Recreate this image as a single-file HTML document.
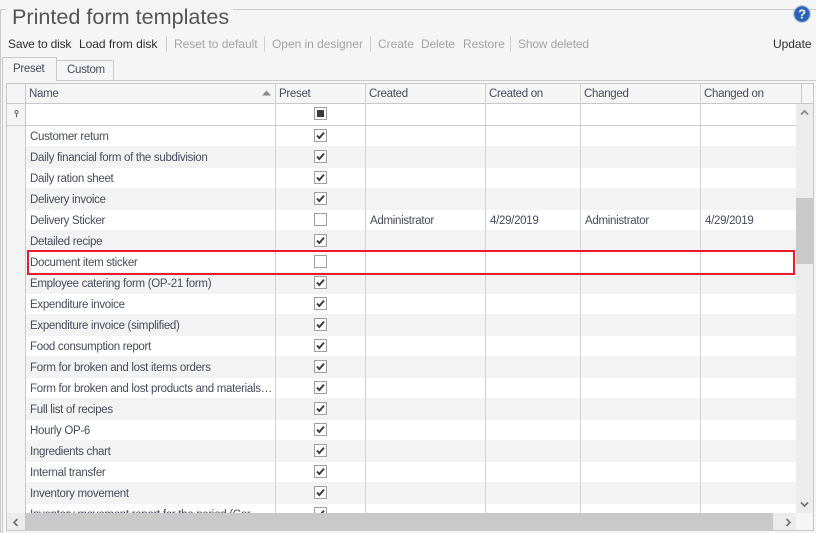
<!DOCTYPE html>
<html><head><meta charset="utf-8">
<style>
*{box-sizing:border-box}
html,body{margin:0;padding:0}
body{width:816px;height:533px;background:#f5f5f5;position:relative;overflow:hidden;font-family:"Liberation Sans",sans-serif;font-size:11.5px;letter-spacing:-.3px;color:#474b5c}
.a{position:absolute}
.t{position:absolute;white-space:nowrap;line-height:14px}
.tb{top:37px;color:#2f2f2f;font-size:12px;letter-spacing:-.03px}
.d{color:#a3a3a3}
.s{position:absolute;top:36px;width:1px;height:16px;background:#cfcfcf}
.h{position:absolute;top:84px;height:19px;border-right:1px solid #c9c9c9}
.h span{position:absolute;left:3px;top:3px;white-space:nowrap;line-height:14px}
.r{position:absolute;left:26px;width:770px;height:21px;background:#fff;overflow:hidden}
.r.g{background:#f3f3f3;margin-top:-1px;height:22px}
.r span{position:absolute;top:4px;line-height:14px;white-space:nowrap}
.r.g span{top:5px}
.r span.n{left:4px}
.r span.c{left:344px}.r span.o{left:464px}.r span.m{left:559px}.r span.p{left:679px}
.r svg{position:absolute;left:288px;top:3px}
.r.g svg{top:4px}
.v{position:absolute;top:84px;width:1px;height:429px;background:#d2d2d2}
</style></head><body>
<svg width="0" height="0" style="position:absolute"><defs>
<symbol id="u" viewBox="0 0 13 13"><rect x=".5" y=".5" width="12" height="12" fill="#fff" stroke="#a0a0a0"/></symbol>
<symbol id="k" viewBox="0 0 13 13"><rect x=".5" y=".5" width="12" height="12" fill="#fff" stroke="#a0a0a0"/><path d="M3 6.5 5.3 9 10 3.6" fill="none" stroke="#3c3c3c" stroke-width="2"/></symbol>
</defs></svg>

<div class="a" style="left:0;top:9px;width:6px;height:1px;background:#c9c9c9"></div>
<div class="a" style="left:233px;top:9px;width:583px;height:1px;background:#c9c9c9"></div>
<div class="a" style="left:0;top:9px;width:1px;height:524px;background:#c9c9c9"></div>
<div class="t" style="left:12px;top:5px;font-size:21.6px;letter-spacing:0;line-height:24px;color:#555">Printed form templates</div>
<svg class="a" style="left:793px;top:5px" width="18" height="18" viewBox="0 0 18 18"><circle cx="9" cy="9" r="8.3" fill="#2a62b8" stroke="#b8c4d8" stroke-width="1.2"/><text x="9" y="13.5" font-family="Liberation Sans" font-weight="700" font-size="13" fill="#fff" text-anchor="middle">?</text></svg>

<div class="t tb" style="left:8px;letter-spacing:-.18px">Save to disk</div>
<div class="t tb" style="left:79px">Load from disk</div>
<div class="s" style="left:166px"></div>
<div class="t tb d" style="left:174px">Reset to default</div>
<div class="s" style="left:264px"></div>
<div class="t tb d" style="left:272px">Open in designer</div>
<div class="s" style="left:370px"></div>
<div class="t tb d" style="left:378px">Create</div>
<div class="t tb d" style="left:421px;letter-spacing:-.15px">Delete</div>
<div class="t tb d" style="left:463px">Restore</div>
<div class="s" style="left:510px"></div>
<div class="t tb d" style="left:518px;letter-spacing:-.15px">Show deleted</div>
<div class="t tb" style="left:773px">Update</div>

<div class="a" style="left:2px;top:80px;width:814px;height:1px;background:#c9c9c9"></div>
<div class="a" style="left:2px;top:80px;width:1px;height:453px;background:#c9c9c9"></div>
<div class="a" style="left:56px;top:60px;width:58px;height:21px;border:1px solid #c9c9c9;background:#f5f5f5"></div>
<div class="a" style="left:2px;top:57px;width:55px;height:24px;border:1px solid #c9c9c9;border-bottom:0;background:#f5f5f5"></div>
<div class="t" style="left:13px;top:62px">Preset</div>
<div class="t" style="left:67px;top:63px">Custom</div>

<div class="a" style="left:6px;top:83px;width:808px;height:448px;border:1px solid #c9c9c9;background:#f5f5f5"></div>
<div class="a" style="left:7px;top:84px;width:806px;height:446px;background:#f5f5f5"></div>
<div class="a" style="left:26px;top:104px;width:770px;height:409px;background:#fff"></div>
<div class="h" style="left:7px;width:19px"></div>
<div class="h" style="left:26px;width:250px"><span>Name</span></div>
<svg class="a" style="left:262px;top:90px" width="9" height="6"><path d="M0 5.5 4.5 .5 9 5.5Z" fill="#8a8a8a"/></svg>
<div class="h" style="left:276px;width:90px"><span>Preset</span></div>
<div class="h" style="left:366px;width:120px"><span>Created</span></div>
<div class="h" style="left:486px;width:95px"><span>Created on</span></div>
<div class="h" style="left:581px;width:120px"><span>Changed</span></div>
<div class="h" style="left:701px;width:101px"><span>Changed on</span></div>
<div class="a" style="left:7px;top:103px;width:806px;height:1px;background:#c9c9c9"></div>
<div class="a" style="left:7px;top:125px;width:789px;height:1px;background:#cfcfcf"></div>
<svg class="a" style="left:14px;top:110px" width="5" height="8"><circle cx="2.5" cy="2" r="1.6" fill="none" stroke="#666"/><path d="M2.5 3.5V7.5" stroke="#666"/></svg>
<svg class="a" style="left:314px;top:107px" width="13" height="13"><rect x=".5" y=".5" width="12" height="12" fill="#fff" stroke="#a0a0a0"/><rect x="3" y="3" width="7" height="7" fill="#3c3c3c"/></svg>

<div class="a" style="left:26px;top:126px;width:770px;height:387px;overflow:hidden">
<div class="r" style="left:0;top:0"><span class="n">Customer return</span><svg width="13" height="13"><use href="#k"/></svg></div>
<div class="r g" style="left:0;top:21px"><span class="n">Daily financial form of the subdivision</span><svg width="13" height="13"><use href="#k"/></svg></div>
<div class="r" style="left:0;top:42px"><span class="n">Daily ration sheet</span><svg width="13" height="13"><use href="#k"/></svg></div>
<div class="r g" style="left:0;top:63px"><span class="n">Delivery invoice</span><svg width="13" height="13"><use href="#k"/></svg></div>
<div class="r" style="left:0;top:84px"><span class="n">Delivery Sticker</span><svg width="13" height="13"><use href="#u"/></svg><span class="c">Administrator</span><span class="o">4/29/2019</span><span class="m">Administrator</span><span class="p">4/29/2019</span></div>
<div class="r g" style="left:0;top:105px"><span class="n">Detailed recipe</span><svg width="13" height="13"><use href="#k"/></svg></div>
<div class="r" style="left:0;top:126px"><span class="n">Document item sticker</span><svg width="13" height="13"><use href="#u"/></svg></div>
<div class="r g" style="left:0;top:147px"><span class="n">Employee catering form (OP-21 form)</span><svg width="13" height="13"><use href="#k"/></svg></div>
<div class="r" style="left:0;top:168px"><span class="n">Expenditure invoice</span><svg width="13" height="13"><use href="#k"/></svg></div>
<div class="r g" style="left:0;top:189px"><span class="n">Expenditure invoice (simplified)</span><svg width="13" height="13"><use href="#k"/></svg></div>
<div class="r" style="left:0;top:210px"><span class="n">Food consumption report</span><svg width="13" height="13"><use href="#k"/></svg></div>
<div class="r g" style="left:0;top:231px"><span class="n">Form for broken and lost items orders</span><svg width="13" height="13"><use href="#k"/></svg></div>
<div class="r" style="left:0;top:252px"><span class="n">Form for broken and lost products and materials…</span><svg width="13" height="13"><use href="#k"/></svg></div>
<div class="r g" style="left:0;top:273px"><span class="n">Full list of recipes</span><svg width="13" height="13"><use href="#k"/></svg></div>
<div class="r" style="left:0;top:294px"><span class="n">Hourly OP-6</span><svg width="13" height="13"><use href="#k"/></svg></div>
<div class="r g" style="left:0;top:315px"><span class="n">Ingredients chart</span><svg width="13" height="13"><use href="#k"/></svg></div>
<div class="r" style="left:0;top:336px"><span class="n">Internal transfer</span><svg width="13" height="13"><use href="#k"/></svg></div>
<div class="r g" style="left:0;top:357px"><span class="n">Inventory movement</span><svg width="13" height="13"><use href="#k"/></svg></div>
<div class="r" style="left:0;top:378px"><span class="n">Inventory movement report for the period (Cor…</span><svg width="13" height="13"><use href="#k"/></svg></div>
</div>

<div class="v" style="left:25px;background:#c9c9c9"></div>
<div class="v" style="left:275px"></div>
<div class="v" style="left:365px"></div>
<div class="v" style="left:485px"></div>
<div class="v" style="left:580px"></div>
<div class="v" style="left:700px"></div>

<div class="a" style="left:27px;top:250px;width:768px;height:25px;border:2px solid #e81c2c"></div>

<div class="a" style="left:796px;top:104px;width:17px;height:409px;background:#ececec"></div>
<div class="a" style="left:796px;top:198px;width:17px;height:66px;background:#c9c9c9"></div>
<svg class="a" style="left:800px;top:109px" width="9" height="7"><path d="M1 5.5 4.5 2 8 5.5" fill="none" stroke="#8a8a8a" stroke-width="1.8"/></svg>
<svg class="a" style="left:800px;top:501px" width="9" height="7"><path d="M1 1.5 4.5 5 8 1.5" fill="none" stroke="#777" stroke-width="1.8"/></svg>
<div class="a" style="left:7px;top:513px;width:773px;height:17px;background:#c9c9c9"></div>
<div class="a" style="left:7px;top:513px;width:18px;height:17px;background:#ececec"></div>
<div class="a" style="left:773px;top:513px;width:23px;height:17px;background:#ececec"></div>
<svg class="a" style="left:12px;top:518px" width="7" height="9"><path d="M5.5 1 2 4.5 5.5 8" fill="none" stroke="#777" stroke-width="1.8"/></svg>
<svg class="a" style="left:785px;top:518px" width="7" height="9"><path d="M1.5 1 5 4.5 1.5 8" fill="none" stroke="#777" stroke-width="1.8"/></svg>
</body></html>
